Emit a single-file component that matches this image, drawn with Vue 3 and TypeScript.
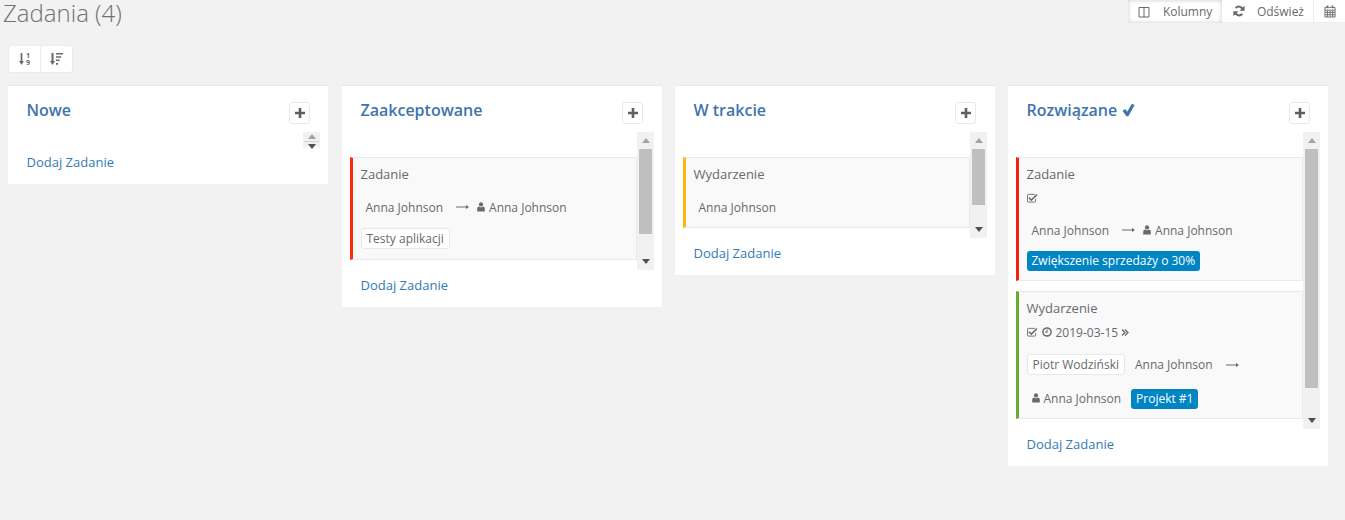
<template>
  <div class="page">
    <header class="top">
      <h1 class="title">Zadania (4)</h1>
      <div class="top-actions">
        <button class="top-btn is-active">
          <svg class="ico" viewBox="0 0 12 12" width="12" height="12"><path d="M1 1.5h10v9.500H1zM6 1.500V11" fill="none" stroke="currentColor" stroke-width="1" /></svg>
          Kolumny
        </button>
        <button class="top-btn">
          <svg class="ico" viewBox="0 0 14 14" width="12" height="12"><path d="M11.4 5.4A4.7 4.7 0 0 0 3.2 3.6M2.6 8.6a4.7 4.7 0 0 0 8.2 1.8" fill="none" stroke="currentColor" stroke-width="2.4" /><path d="M13.6.8v6H7.6zM.4 13.2v-6h6z" fill="currentColor" /></svg>
          Odśwież
        </button>
        <button class="top-btn is-icon">
          <svg class="ico" viewBox="0 0 13 14" width="12" height="13"><path d="M1 2.5h11V13H1zM1 5.5h11M1 8h11M1 10.5h11M3.7 5.5V13M6.5 5.5V13M9.3 5.5V13" fill="none" stroke="currentColor" stroke-width="1" /><path d="M3 .5h1.6v3H3zM8.4.5H10v3H8.4z" fill="currentColor" /></svg>
        </button>
      </div>
    </header>

    <div class="sorters">
      <button class="sort-btn">
        <svg viewBox="0 0 8 12" width="5" height="12" preserveAspectRatio="none"><path d="M2.6 0h2.8v8h2.4L4 12 .2 8h2.4z" fill="currentColor" /></svg>
        <span class="digits"><span>1</span><span>9</span></span>
      </button>
      <button class="sort-btn">
        <svg viewBox="0 0 13 12" width="13" height="12"><path d="M1.5 0h2v8H5l-2.5 4L0 8h1.5zM6 0h7v1.6H6zM6 3.2h5.2v1.6H6zM6 6.4h3.6V8H6zM6 10h2v1.8H6z" fill="currentColor" /></svg>
      </button>
    </div>

    <main class="board">
      <section v-for="col in columns" :key="col.name" class="column">
        <div class="col-head">
          <h2 class="col-title">
            {{ col.name }}
            <svg v-if="col.done" class="done" viewBox="0 0 14 14" width="13" height="14"><path d="M.6 7.8l3-2 2 3.2L10.6.4l3 1.2-6.800 12H4.600z" fill="currentColor" /></svg>
          </h2>
          <button class="add-btn">
            <svg viewBox="0 0 10 10" width="10" height="10"><path d="M3.7 0h2.6v3.7H10v2.6H6.3V10H3.7V6.3H0V3.7h3.7z" fill="currentColor" /></svg>
          </button>
        </div>

        <div class="list" :class="{ 'is-empty': !col.cards.length }">
          <div class="cards">
            <article v-for="card in col.cards" :key="card.title" class="card" :style="{ borderLeftColor: card.color }">
              <div class="card-title">{{ card.title }}</div>
              <div v-if="card.checked" class="meta">
                <svg viewBox="0 0 12 11" width="11" height="10"><path d="M9.5 6.5V9a1 1 0 0 1-1 1h-7a1 1 0 0 1-1-1V2.500a1 1 0 0 1 1-1h7" fill="none" stroke="currentColor" /><path d="M2.7 4.6l2 2 5.6-5.500 1.200 1.200-6.800 6.800-3.200-3.200z" fill="currentColor" /></svg>
                <template v-if="card.date">
                  <svg class="clock" viewBox="0 0 12 12" width="10" height="10"><circle cx="6" cy="6" r="4.9" fill="none" stroke="currentColor" stroke-width="1.8" /><path d="M6 3v3.3H3.8" fill="none" stroke="currentColor" stroke-width="1.3" /></svg>
                  <span>{{ card.date }}</span>
                  <svg viewBox="0 0 8 8" width="8" height="9"><path d="M1 1l3 3-3 3M4 1l3 3-3 3" fill="none" stroke="currentColor" stroke-width="1.3" /></svg>
                </template>
              </div>
              <div class="people" :class="{ 'after-meta': card.checked, 'has-owner': card.owner }">
                <span v-if="card.owner" class="tag">{{ card.owner }}</span>
                <span class="person">{{ card.from }}</span>
                <template v-if="card.to">
                  <svg class="arrow" viewBox="0 0 13 6" width="13" height="6"><path d="M0 3h11.500" stroke="currentColor" /><path d="M10 1l3 2-3 2z" fill="currentColor" /></svg>
                  <span class="person">
                    <svg viewBox="0 0 8 10" width="8" height="10"><circle cx="4" cy="2.4" r="2.1" fill="currentColor" /><path d="M.2 9.5V7c0-1.600 1.100-2.400 2-2.400L4 5.600l1.800-1c.9 0 2 .8 2 2.400v2.500z" fill="currentColor" /></svg>
                    {{ card.to }}
                  </span>
                </template>
                <span v-if="card.tag" class="tag">{{ card.tag }}</span>
                <span v-if="card.badge" class="badge">{{ card.badge }}</span>
              </div>
            </article>
          </div>
          <div class="scrollbar">
            <span class="tri up"></span>
            <div class="track">
              <div v-if="col.thumb" class="thumb" :style="{ height: col.thumb + 'px' }"></div>
            </div>
            <span class="tri down"></span>
          </div>
        </div>

        <a class="add-link">Dodaj Zadanie</a>
      </section>
    </main>
  </div>
</template>

<script setup lang="ts">
interface Card {
  title: string;
  color: string;
  checked?: boolean;
  date?: string;
  owner?: string;
  from: string;
  to?: string;
  tag?: string;
  badge?: string;
}

interface Column {
  name: string;
  done?: boolean;
  thumb: number;
  cards: Card[];
}

const columns: Column[] = [
  { name: "Nowe", thumb: 0, cards: [] },
  {
    name: "Zaakceptowane",
    thumb: 85,
    cards: [
      { title: "Zadanie", color: "#ff2a0d", from: "Anna Johnson", to: "Anna Johnson", tag: "Testy aplikacji" },
    ],
  },
  {
    name: "W trakcie",
    thumb: 56,
    cards: [{ title: "Wydarzenie", color: "#fdb813", from: "Anna Johnson" }],
  },
  {
    name: "Rozwiązane",
    done: true,
    thumb: 239,
    cards: [
      {
        title: "Zadanie",
        color: "#f5210f",
        checked: true,
        from: "Anna Johnson",
        to: "Anna Johnson",
        badge: "Zwiększenie sprzedaży o 30%",
      },
      {
        title: "Wydarzenie",
        color: "#66ad2f",
        checked: true,
        date: "2019-03-15",
        owner: "Piotr Wodziński",
        from: "Anna Johnson",
        to: "Anna Johnson",
        badge: "Projekt #1",
      },
    ],
  },
];
</script>

<style>
html,
body {
  background: #f2f2f2;
}
</style>

<style scoped>
.page {
  min-height: 520px;
  background: #f2f2f2;
  color: #676a6c;
  font-family: "Open Sans", sans-serif;
  font-size: 13px;
  overflow: hidden;
}

.top {
  display: flex;
  justify-content: space-between;
  height: 45px;
}

.title {
  margin: 0 0 0 3px;
  color: #6e7176;
  font-size: 24px;
  font-weight: 300;
  line-height: 25px;
}

.top-actions {
  display: flex;
  height: 23px;
}

.top-btn {
  display: flex;
  align-items: center;
  gap: 12px;
  padding: 0 9px 0 11px;
  border: 0;
  border-bottom: 1px solid #eceef0;
  background: #fff;
  color: #676a6c;
  font: inherit;
  font-size: 12px;
}

.top-btn + .top-btn + .top-btn {
  padding-left: 10px;
  border-left: 1px solid #eceef0;
}

.top-btn.is-active {
  width: 94px;
  padding-left: 10px;
  gap: 13px;
  border: 0;
  border-radius: 0 0 0 3px;
  box-shadow: inset 0 0 4px rgba(0, 0, 0, 0.22);
}

.ico {
  flex: none;
}

.sorters {
  display: flex;
  width: 65px;
  height: 28px;
  margin: 0 0 12px 8px;
  border: 1px solid #eaecee;
  border-radius: 3px;
  background: #fff;
  box-sizing: border-box;
}

.sort-btn {
  flex: 1;
  display: flex;
  align-items: center;
  justify-content: center;
  gap: 2px;
  padding: 0;
  border: 0;
  background: none;
  color: #676a6c;
}

.sort-btn + .sort-btn {
  border-left: 1px solid #eaecee;
}

.digits {
  display: flex;
  flex-direction: column;
  font-family: "Open Sans", sans-serif;
  font-size: 7px;
  font-weight: 700;
  line-height: 7px;
}

.board {
  display: flex;
  align-items: flex-start;
  gap: 13px;
  padding: 0 17px 0 8px;
}

.column {
  width: 320px;
  padding: 0 8px;
  border-top: 1px solid #e7eaec;
  background: #fff;
  box-sizing: border-box;
}

.column:nth-child(2) {
  margin-left: 1px;
}

.col-head {
  display: flex;
  justify-content: space-between;
  height: 46px;
  padding: 16px 10px 0 11px;
  box-sizing: border-box;
}

.column:nth-child(2) .col-head,
.column:nth-child(3) .col-head {
  padding-right: 11px;
}

.col-title {
  margin: -1px 0 0 -0.5px;
  color: #3f74ad;
  font-size: 16px;
  font-weight: 600;
  line-height: 18px;
}

.done {
  margin-left: 1px;
  vertical-align: -1px;
}

.add-btn {
  display: flex;
  align-items: center;
  justify-content: center;
  width: 21px;
  height: 22px;
  padding: 0;
  border: 1px solid #e7eaec;
  border-radius: 3px;
  background: #fff;
  color: #5f5f5f;
}

.list {
  display: flex;
}

.cards {
  flex: 1;
  min-width: 0;
  padding-top: 25px;
}

.is-empty .cards {
  padding-top: 0;
}

.card {
  margin-bottom: 10px;
  padding: 7px 10px 10px 7.5px;
  border: 1px solid #e7eaec;
  border-left: 3px solid;
  background: #f9f9f9;
}

.card-title {
  line-height: 19px;
}

.meta {
  display: flex;
  align-items: center;
  gap: 3px;
  height: 14px;
  margin-top: 7px;
  font-size: 12px;
}

.clock {
  margin-left: 1px;
  margin-right: 1px;
}

.people {
  display: flex;
  flex-wrap: wrap;
  align-items: center;
  margin-top: 13px;
  row-gap: 11px;
  font-size: 12px;
}

.people.after-meta {
  margin-top: 15px;
}

.people.has-owner {
  row-gap: 13px;
}

.person {
  display: inline-flex;
  align-items: center;
  gap: 4px;
  height: 20px;
  padding-left: 5px;
}

.tag + .person {
  padding-left: 10px;
}

.arrow {
  margin: 0 3px 0 13px;
}

.tag,
.badge {
  display: inline-block;
  padding: 0 5px;
  border-radius: 3px;
  box-sizing: border-box;
  font-size: 12px;
  line-height: 19px;
}

.tag {
  height: 21px;
  border: 1px solid #e7eaec;
  background: #fff;
}

.badge {
  height: 20px;
  margin-bottom: -1px;
  background: #0085c3;
  color: #fff;
  line-height: 20px;
}

.has-owner .badge {
  margin-left: 10px;
}

.scrollbar {
  flex: none;
  display: flex;
  flex-direction: column;
  width: 17px;
  background: #f1f1f1;
}

.is-empty .scrollbar {
  height: 15px;
  margin-left: auto;
}

.track {
  flex: 1;
  display: flex;
  flex-direction: column;
  padding: 0 2px;
}

.is-empty .track {
  flex: 0 0 1px;
  padding: 0 1px;
  background: #d5d5d5;
  background-clip: content-box;
}

.thumb {
  background: #bfbfbf;
}

.tri {
  flex: none;
  display: block;
  width: 0;
  height: 0;
  margin: 6px auto;
  border-left: 4px solid transparent;
  border-right: 4px solid transparent;
}

.tri.up {
  border-bottom: 5px solid #a3a3a3;
}

.tri.down {
  border-top: 5px solid #505050;
}

.is-empty .tri {
  margin: 2px auto;
}

.add-link {
  display: block;
  padding: 6px 0 13px 10.5px;
  color: #337ab7;
  line-height: 18px;
}
</style>
